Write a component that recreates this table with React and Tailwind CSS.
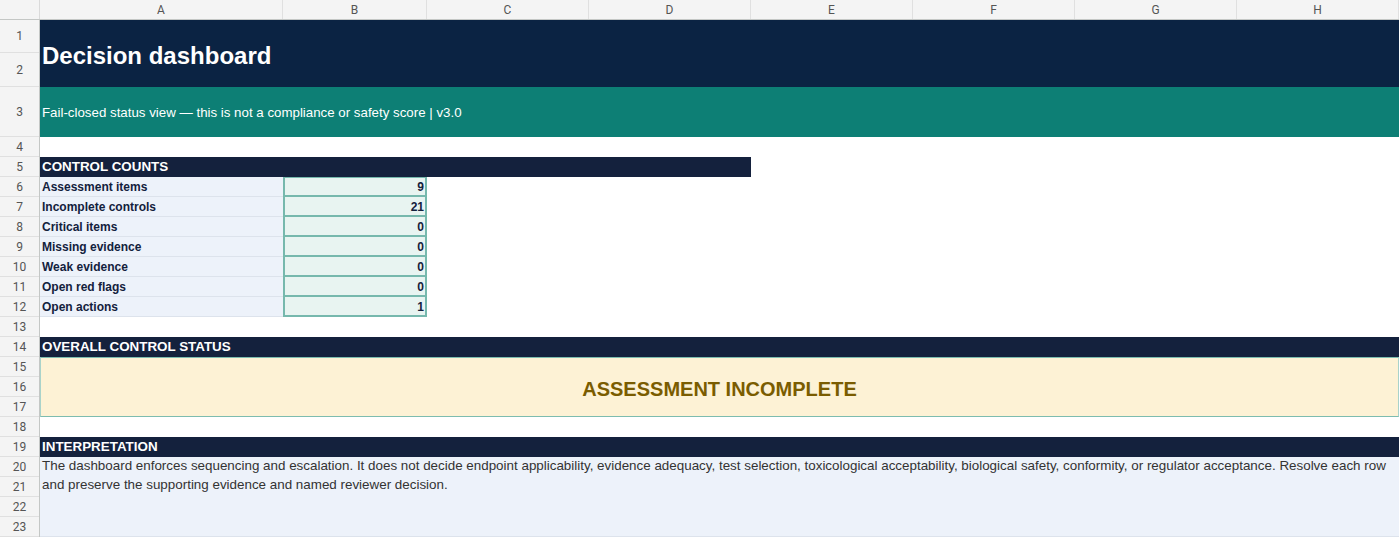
import React from "react";

const cols = [
  ["A", 243],
  ["B", 144],
  ["C", 162],
  ["D", 162],
  ["E", 162],
  ["F", 162],
  ["G", 162],
  ["H", 162],
];

const rowHeights = [33, 34, 50, 20, 20, 20, 20, 20, 20, 20, 20, 20, 20, 20, 20, 20, 20, 20, 20, 20, 20, 20, 20];

const counts = [
  ["Assessment items", "9"],
  ["Incomplete controls", "21"],
  ["Critical items", "0"],
  ["Missing evidence", "0"],
  ["Weak evidence", "0"],
  ["Open red flags", "0"],
  ["Open actions", "1"],
];

function SectionHeader({ children, full }) {
  return (
    <div
      className={`h-[20px] bg-[#14213d] text-white font-bold text-[13.4px] flex items-center pl-[2px] pt-[1px] ${
        full ? "w-full" : "w-[711px]"
      }`}
    >
      {children}
    </div>
  );
}

export default function App() {
  return (
    <div
      className="w-[1399px] h-[538px] overflow-hidden bg-white"
      style={{ fontFamily: '"Liberation Sans", Arial, sans-serif' }}
    >
      {/* column header */}
      <div className="flex h-[20px] bg-[#f4f4f4] border-b border-[#c4c7c5]">
        <div className="w-[40px] shrink-0 border-r border-[#dadada]" />
        {cols.map(([l, w]) => (
          <div
            key={l}
            style={{ width: w }}
            className="shrink-0 border-r border-[#e0e0e0] flex items-center justify-center text-[12px] text-[#555] font-['Roboto',sans-serif]"
          >
            {l}
          </div>
        ))}
      </div>

      <div className="flex">
        {/* row numbers */}
        <div className="w-[40px] shrink-0 flex flex-col bg-[#f4f4f4] border-r border-[#c4c7c5]">
          {rowHeights.map((h, i) => (
            <div
              key={i}
              style={{ height: h }}
              className="border-b border-[#e0e0e0] flex items-center justify-center text-[12px] text-[#555] font-['Roboto',sans-serif]"
            >
              {i + 1}
            </div>
          ))}
        </div>

        {/* content */}
        <div className="flex-1 flex flex-col">
          <div className="h-[67px] bg-[#0b2343] flex items-center pl-[2px] pt-[4px] text-white font-bold text-[24px]">
            Decision dashboard
          </div>
          <div className="h-[50px] bg-[#0d7f75] flex items-center pl-[2px] pt-[1px] text-white text-[13.3px]">
            Fail-closed status view — this is not a compliance or safety score | v3.0
          </div>
          <div className="h-[20px]" />
          <SectionHeader>CONTROL COUNTS</SectionHeader>
          {counts.map(([label, value], i) => (
            <div key={label} className="flex h-[20px]">
              <div className="w-[243px] bg-[#edf2fa] border-b border-[#dde3ec] flex items-center pl-[2px] pt-[1px] text-[12px] font-bold text-[#13213d]">
                {label}
              </div>
              <div
                className={`w-[144px] bg-[#e8f4f1] border-x-2 border-b-2 border-[#76b8ad] flex items-center justify-end pr-[1px] pt-[1px] text-[12px] font-bold text-[#13213d] ${
                  i === 0 ? "border-t" : ""
                }`}
              >
                {value}
              </div>
            </div>
          ))}
          <div className="h-[20px]" />
          <SectionHeader full>OVERALL CONTROL STATUS</SectionHeader>
          <div className="h-[60px] bg-[#fdf2d5] border-y border-[#7dbcaf] border-x border-x-[#a9d3ca] flex items-center justify-center pt-[3px] text-[20px] font-bold text-[#7a5c00]">
            ASSESSMENT INCOMPLETE
          </div>
          <div className="h-[20px]" />
          <SectionHeader full>INTERPRETATION</SectionHeader>
          <div className="h-[80px] bg-[#edf2fa] border-b border-[#dde3ec] px-[2px] text-[13.4px] leading-[18.5px] text-[#333]">
            The dashboard enforces sequencing and escalation. It does not decide endpoint applicability, evidence
            adequacy, test selection, toxicological acceptability, biological safety, conformity, or regulator
            acceptance. Resolve each row and preserve the supporting evidence and named reviewer decision.
          </div>
        </div>
      </div>
    </div>
  );
}
